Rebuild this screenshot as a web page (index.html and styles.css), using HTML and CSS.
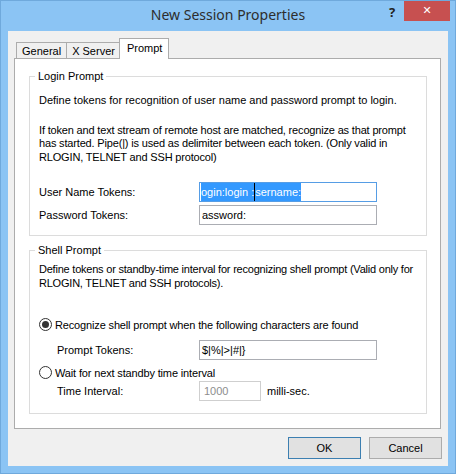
FILE: index.html
```html
<!DOCTYPE html>
<html><head>
  <meta charset="UTF-8">
  <title>New Session Properties</title>
  <link rel="stylesheet" href="styles.css">
</head><body>

<div class="window">
  <div class="titlebar">
    <span></span>
    <span class="title">New Session Properties</span>
    <span class="controls"><span class="help">?</span><span class="close">&#x2715;</span></span>
  </div>

  <div class="client">
    <div class="tabs">
      <span class="tab">General</span>
      <span class="tab">X Server</span>
      <span class="tab active">Prompt</span>
    </div>

    <div class="panel">
      <fieldset class="group login">
        <legend>Login Prompt</legend>
        <p class="intro">Define tokens for recognition of user name and password prompt to login.</p>
        <p class="note">If token and text stream of remote host are matched, recognize as that prompt<br>
          has started. Pipe(|) is used as delimiter between each token. (Only valid in<br>
          RLOGIN, TELNET and SSH protocol)</p>
        <div class="row first">
          <span class="label">User Name Tokens:</span>
          <span class="field focus"><span class="sel">ogin:login :</span><span class="caret"></span><span class="sel">sername:</span></span>
        </div>
        <div class="row">
          <span class="label">Password Tokens:</span>
          <span class="field">assword:</span>
        </div>
      </fieldset>

      <fieldset class="group shell">
        <legend>Shell Prompt</legend>
        <p class="intro">Define tokens or standby-time interval for recognizing shell prompt (Valid only for<br>
          RLOGIN, TELNET and SSH protocols).</p>
        <div class="radio-row first">
          <span class="radio checked"></span>
          <span>Recognize shell prompt when the following characters are found</span>
        </div>
        <div class="row sub">
          <span class="label">Prompt Tokens:</span>
          <span class="field">$|%|&gt;|#|}</span>
        </div>
        <div class="radio-row">
          <span class="radio"></span>
          <span>Wait for next standby time interval</span>
        </div>
        <div class="row sub tight">
          <span class="label">Time Interval:</span>
          <span class="field short disabled">1000</span>
          <span class="unit">milli-sec.</span>
        </div>
      </fieldset>
    </div>

    <div class="buttons">
      <span class="btn default">OK</span>
      <span class="btn">Cancel</span>
    </div>
  </div>
</div>

</body></html>
```

FILE: styles.css
```css
body { margin: 0; background: #8bc4f4; }
body, p, fieldset, legend { font-family: "Liberation Sans", Arial, sans-serif; }

.window { width: 456px; height: 474px; box-sizing: border-box;
  background: #8bc4f4; border: 1px solid #6fa9dc; }

/* title bar */
.titlebar { display: grid; grid-template-columns: 1fr auto 1fr; height: 30px; }
.title { font-family: "Noto Sans", "Open Sans", sans-serif; font-size: 14px;
  color: #2d2d2d; line-height: 28px; }
.controls { display: flex; justify-content: flex-end; align-items: flex-start; }
.help { font-family: "Noto Sans", sans-serif; font-weight: bold; font-size: 13px;
  color: #222; width: 24px; text-align: center; line-height: 20px; margin-top: 1px; }
.close { width: 46px; height: 20px; background: #c75050; color: white;
  font-size: 11px; font-weight: bold; text-align: center; line-height: 20px;
  margin-right: 5px; font-family: "DejaVu Sans", sans-serif; }

/* client area */
.client { background: #f0f0f0; margin: 0 7px; height: 435px;
  padding: 7px 7px 0 6px; box-sizing: border-box; }

.tabs { display: flex; align-items: flex-end; height: 20px; padding-left: 2px;
  position: relative; z-index: 1; }
.tab { font-size: 11px; line-height: 14px; height: 16px; box-sizing: border-box;
  padding: 1px 5px 0; border: 1px solid #acacac; border-bottom: none;
  background: #f0f0f0; color: #000; margin-right: -1px; }
.tab.active { height: 21px; background: white; padding: 2px 6px 0 7px;
  margin: 0 0 -1px -1px; border-color: #acacac; }

.panel { background: white; border: 1px solid #acacac; height: 371px;
  box-sizing: border-box; padding: 11px 12px 0 14px; }

/* group boxes */
.group { border: 1px solid #dcdcdc; margin: 0; padding: 0 8px 0 9px;
  box-sizing: border-box; width: 398px; min-width: 0; }
.group legend { font-size: 11px; line-height: 13px; padding: 0 3px; margin-left: -4px; }
.group.login { height: 166px; }
.group.shell { height: 170px; margin-top: 8px; }

p { margin: 0; font-size: 11px; line-height: 13.5px; color: #000; white-space: nowrap; }
.login .intro { margin-top: 11px; }
.login .note { margin-top: 16px; letter-spacing: -0.17px; }
.shell .intro { margin-top: 6px; letter-spacing: -0.22px; }

.row { display: flex; align-items: center; font-size: 11px; margin-top: 3px; }
.row.first { margin-top: 18px; }
.row.sub { padding-left: 18px; }
.row.sub .label { width: 142px; }
.label { width: 160px; }

.field { width: 178px; height: 20px; box-sizing: border-box; border: 1px solid #abadb3;
  background: white; padding: 0 2px; line-height: 18px; white-space: nowrap;
  overflow: hidden; display: flex; }
.field.focus { border-color: #569de5; padding-left: 1px; }
.sel { background: #3399ff; color: white; }
.caret { width: 1px; background: #000; }
.field.short { width: 62px; }
.field.disabled { color: #8d8d8d; border-color: #cfcfcf; padding-left: 4px; }
.unit { margin-left: 6px; }

.radio-row { display: flex; align-items: center; font-size: 11px; gap: 3px;
  letter-spacing: -0.15px; }
.radio-row.first { margin-top: 28px; }
.radio-row + .row { margin-top: 9px; }
.radio-row + .row.tight { margin-top: 2px; }
.row + .radio-row { margin-top: 6px; }
.radio { width: 13px; height: 13px; box-sizing: border-box; border-radius: 50%;
  border: 1px solid #333; background: white; position: relative; }
.radio.checked::after { content: ""; position: absolute; left: 2px; top: 2px;
  width: 7px; height: 7px; border-radius: 50%; background: #333; }

/* dialog buttons */
.buttons { display: flex; justify-content: flex-end; gap: 8px; margin-top: 8px;
  margin-right: -1px; }
.btn { width: 73px; height: 22px; box-sizing: border-box; border: 1px solid #acacac;
  background: #e1e1e1; font-size: 11px; text-align: center; line-height: 20px; }
.btn.default { border-color: #3c7fb1; }
```
